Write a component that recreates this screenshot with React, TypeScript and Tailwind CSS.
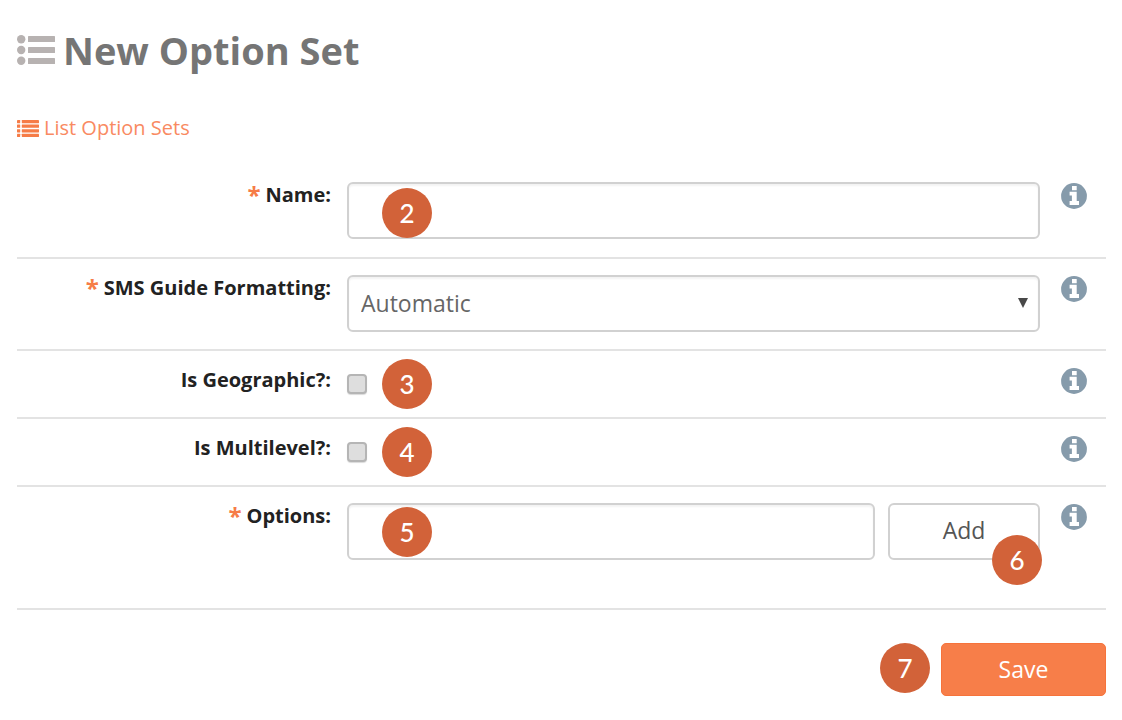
import type { ReactNode } from "react";

function Badge({ n, className }: { n: number; className: string }) {
  return (
    <span
      className={`pointer-events-none absolute flex size-[50px] items-center justify-center rounded-full bg-[#d26239] font-['Lato',sans-serif] text-[26px] leading-8 font-medium text-white ${className}`}
    >
      {n}
    </span>
  );
}

function BulletListIcon() {
  return (
    <svg viewBox="0 0 38 30" className="h-[30px] w-[38px] shrink-0" fill="#b7b2b1" aria-hidden="true">
      <circle cx="4.2" cy="4.2" r="4.2" />
      <circle cx="4.2" cy="15" r="4.2" />
      <circle cx="4.2" cy="25.8" r="4.2" />
      <rect x="11" y="1" width="27" height="6" rx="0.6" />
      <rect x="11" y="12" width="27" height="6" rx="0.6" />
      <rect x="11" y="23" width="27" height="6" rx="0.6" />
    </svg>
  );
}

function ListIcon() {
  return (
    <svg viewBox="0 0 22 17" className="h-[17px] w-[22px] shrink-0" fill="#f67c47" aria-hidden="true">
      {[0, 4.6, 9.2, 13.8].map((y) => (
        <g key={y}>
          <rect x="0" y={y} width="3.2" height="3.2" rx="0.4" />
          <rect x="4.8" y={y} width="17.2" height="3.2" rx="0.4" />
        </g>
      ))}
    </svg>
  );
}

function InfoButton({ topic }: { topic: string }) {
  return (
    <button type="button" aria-label={`About ${topic}`} className="block size-[26px]">
      <svg viewBox="0 0 26 26" className="size-[26px]" aria-hidden="true">
        <circle cx="13" cy="13" r="12.9" fill="#869bab" />
        <path
          fill="#fff"
          d="M11 3h4.7v4.3H11zM8.6 8.8h7.1v9.3H18v3.8H8.6v-3.8h2.3v-5.6H8.6z"
        />
      </svg>
    </button>
  );
}

type RowProps = {
  id: string;
  label: string;
  required?: boolean;
  className?: string;
  children: ReactNode;
};

function Row({ id, label, required, className = "pb-[17px]", children }: RowProps) {
  return (
    <div className={`flex items-start border-b-2 border-[#e3e3e3] pt-4 ${className}`}>
      <label
        htmlFor={id}
        className="mr-4 flex w-[314px] shrink-0 justify-end gap-[5px] pt-px text-[20px] leading-6 font-bold whitespace-nowrap text-[#222]"
      >
        {required && <span className="text-[24px] text-[#f67c47]">*</span>}
        <span>{label}</span>
      </label>
      <div className="relative flex min-w-0 flex-1">{children}</div>
      <div className="ml-[21px] w-[45px] shrink-0 pt-px">
        <InfoButton topic={label.replace(":", "")} />
      </div>
    </div>
  );
}

const field =
  "h-[57px] w-full min-w-0 rounded-md border-2 border-[#d1d1d1] bg-white text-[23px] text-[#666] shadow-[inset_0_2px_2px_rgba(0,0,0,0.05)]";
const checkbox =
  "mt-[7px] size-5 appearance-none rounded-[4px] border-2 border-[#b5b5b5] bg-[#dedede] shadow-[0_1px_1px_rgba(0,0,0,0.15)] checked:bg-[#f67c47]";

export default function App() {
  return (
    <main className="min-h-screen bg-white pt-6 pr-4 pb-6 pl-[17px] font-['Open_Sans',sans-serif]">
      <h1 className="flex items-center gap-2 text-[38px] leading-[52px] font-bold text-[#757575]">
        <BulletListIcon />
        New Option Set
      </h1>
      <a href="#option-sets" className="mt-10 flex w-fit items-center gap-[5px] text-[20px] leading-6 text-[#f98a62]">
        <ListIcon />
        List Option Sets
      </a>

      <form className="mt-[26px]" onSubmit={(e) => e.preventDefault()}>
        <Row id="name" label="Name:" required className="pb-[18px]">
          <input id="name" type="text" className={`${field} px-3`} />
          <Badge n={2} className="top-1.5 left-[35px]" />
        </Row>
        <Row id="sms" label="SMS Guide Formatting:" required>
          <select id="sms" className={`${field} appearance-none px-3`}>
            <option>Automatic</option>
          </select>
          <svg
            viewBox="0 0 10 10"
            className="pointer-events-none absolute top-[23px] right-3 size-[10px]"
            fill="#484848"
            aria-hidden="true"
          >
            <path d="M0 0h10L5 10z" />
          </svg>
        </Row>
        <Row id="geographic" label="Is Geographic?:" className="h-[68px]">
          <input id="geographic" type="checkbox" className={checkbox} />
          <Badge n={3} className="-top-2 left-[35px]" />
        </Row>
        <Row id="multilevel" label="Is Multilevel?:" className="h-[68px]">
          <input id="multilevel" type="checkbox" className={checkbox} />
          <Badge n={4} className="-top-2 left-[35px]" />
        </Row>
        <Row id="options" label="Options:" required className="pb-12">
          <div className="flex w-full gap-[13px]">
            <input id="options" type="text" className={`${field} px-3`} />
            <button
              type="button"
              className="h-[57px] w-[152px] shrink-0 rounded-md border-2 border-[#d1d1d1] bg-white pb-0.5 text-[23px] text-[#555]"
            >
              Add
            </button>
          </div>
          <Badge n={5} className="top-1 left-[35px]" />
          <Badge n={6} className="top-8 -right-0.5" />
        </Row>
        <div className="mt-[33px] flex justify-end">
          <div className="relative">
            <button
              type="submit"
              className="h-[53px] w-[165px] rounded-[5px] border border-[#f6733b] bg-[#f77e49] text-[23px] text-white"
            >
              Save
            </button>
            <Badge n={7} className="top-0 right-[176px]" />
          </div>
        </div>
      </form>
    </main>
  );
}
